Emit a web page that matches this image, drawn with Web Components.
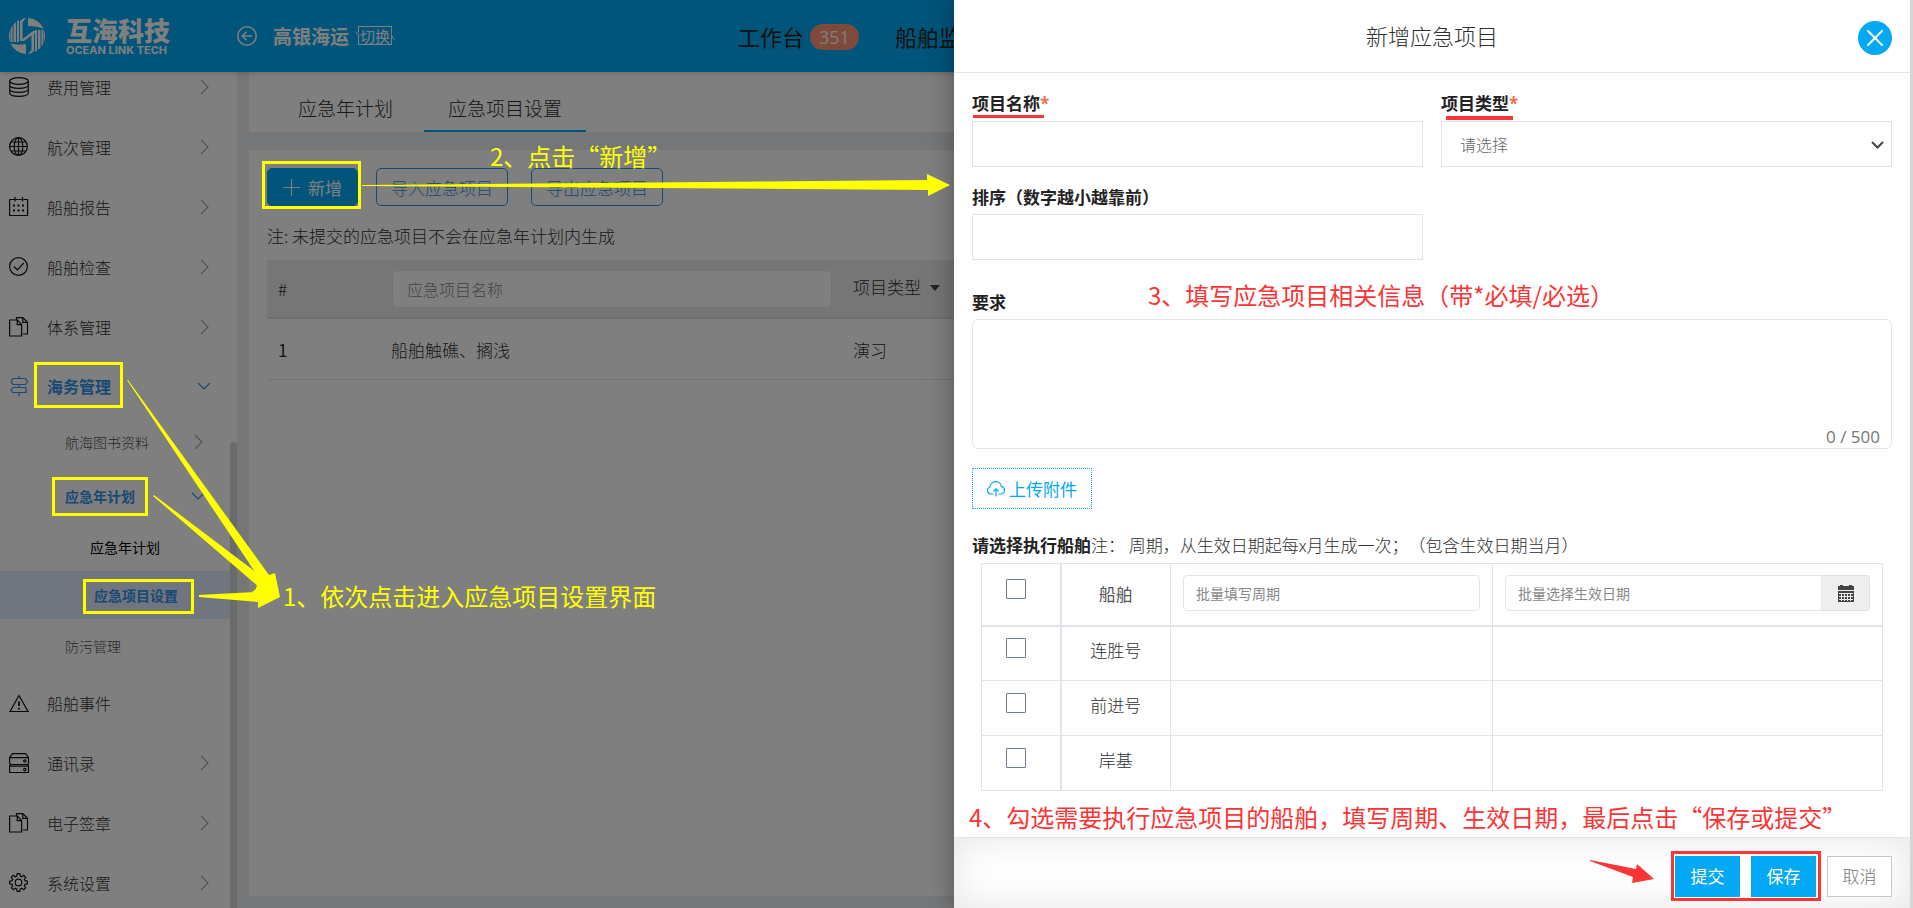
<!DOCTYPE html>
<html lang="zh-CN">
<head>
<meta charset="utf-8">
<title>互海科技 - 应急项目设置</title>
<style>
  html, body { margin: 0; height: 100%; }
  body {
    --cjk: "Noto Sans CJK SC", sans-serif;
    --num: "Open Sans", "Noto Sans CJK SC", sans-serif;
    --brand: #03a9f4;
    --active: #3092e8;
    --line: #e1e5e9;
    font-family: var(--cjk);
    font-size: 17px;
    font-weight: 300;
    color: #303030;
    text-spacing-trim: space-all;
    overflow: hidden;
  }
</style>
</head>
<body>
<app-shell></app-shell>

<script>
const define = (name, html, setup) => {
  const template = document.createElement('template');
  template.innerHTML = html;
  customElements.define(name, class extends HTMLElement {
    constructor() {
      super();
      this.attachShadow({ mode: 'open' }).append(template.content.cloneNode(true));
    }
    connectedCallback() { if (setup) setup(this, this.shadowRoot); }
  });
};

/* Line icons of the side menu, on a 20 x 20 grid */
const ICONS = {
  coins: '<ellipse cx="10" cy="4" rx="9.3" ry="3.4"/><path d="M.7 4v12c0 2 4 3.400 9.300 3.400s9.300-1.400 9.300-3.400V4M.7 8c0 2 4 3.400 9.300 3.400S19.300 10 19.300 8M.7 12c0 2 4 3.400 9.300 3.400s9.300-1.400 9.300-3.400"/>',
  globe: '<circle cx="9.500" cy="9.500" r="8.900"/><ellipse cx="9.500" cy="9.500" rx="4.300" ry="8.900"/><path d="M9.500.6v17.800M.6 9.500h17.800M2 5h15M2 14h15"/>',
  calendar: '<path d="M.6 2.500h18v16H.6zM6 0v4.500M13.500 0v4.500"/><path stroke-width="2" d="M4 8.500h2M8.500 8.500h2M13 8.500h2M4 13.500h2M8.500 13.500h2M13 13.500h2"/>',
  check: '<circle cx="9.500" cy="9.500" r="8.900"/><path d="M4.800 9.500l3.500 3.500 6.500-7"/>',
  files: '<path d="M.6 3h7.800l4.200 4.500V19H.6zM8.200 3.200v4.500h4.200M7.500 3V.6h6.300l4.700 4.600V17h-4.500M13.700.8v4.600h4.600"/>',
  sign: '<path d="M10 0v2.500M10 8.500v3M10 16.500V20M4 2.500h12.500l2 3-2 3H4l-2-3zM4 11.500h13v5H4l-2-2.500z"/>',
  warning: '<path d="M10 2.500l9 16H1z"/><path stroke-width="1.800" d="M10 8.500v4.500M10 14.800v1.700"/>',
  server: '<path d="M3.500.7h13l3 3.800v5.800l-1 1 1 1.200v7H.6v-7l1-1.200-1-1V4.500zM.6 4.700h19M1 11.500h18M.6 13.200h19"/><circle cx="15.800" cy="8" r="1.200"/><circle cx="15.800" cy="16.600" r="1.200"/>',
  gear: '<circle cx="9.500" cy="9.500" r="3.300"/><path d="M8.200.7h2.600l.5 2.300 1.500.7 2-1.400 1.900 1.900-1.400 2 .7 1.500 2.400.5v2.600l-2.400.5-.7 1.500 1.400 2-1.900 1.900-2-1.400-1.500.7-.5 2.400H8.200l-.5-2.400-1.500-.7-2 1.400-1.900-1.900 1.400-2L3 11.300l-2.400-.5V8.200L3 7.700l.7-1.500-1.400-2 1.900-1.900 2 1.400L7.700 3z"/>'
};

define('nav-item', `
<style>
  :host { display: block; }
  a {
    display: grid; grid-template-columns: 38px 1fr 30px; align-items: center;
    box-sizing: border-box; height: 60px; padding-left: 9px; padding-right: 18px;
    color: inherit; text-decoration: none; font-size: 16px; white-space: nowrap;
  }
  :host([compact]) a { height: 58px; }
  :host([level="2"]) a, :host([level="3"]) a { font-size: 14px; }
  :host([level="2"]) a { height: 54px; grid-template-columns: 1fr 30px; padding-left: 65px; padding-right: 24px; color: #505050; }
  :host([level="3"]) a { height: 48px; grid-template-columns: 1fr; padding-left: 90px; color: #000; font-weight: 400; }
  :host([level]) .icon { display: none; }
  :host([level="3"]) .arrow { display: none; }
  :host([active]) a { color: var(--active); font-weight: 700; }
  :host([selected]) a { background: #e2ebfd; padding-left: 94px; }
  svg { fill: none; stroke: currentColor; stroke-width: 1.2; overflow: visible; display: block; }
  .icon { color: #111; }
  :host([active]) .icon { color: var(--active); }
  .arrow { color: #a8a8a8; justify-self: center; }
  :host([active]) .arrow { color: var(--active); }
</style>
<a href="#">
  <svg class="icon" width="20" height="20"></svg>
  <span><slot></slot></span>
  <svg class="arrow" width="14" height="14"></svg>
</a>`, (host, root) => {
  root.querySelector('.icon').innerHTML = ICONS[host.getAttribute('icon')] || '';
  const arrow = { right: 'M4 0l7 7-7 7', down: 'M1 4l6 6 6-6' }[host.getAttribute('arrow')];
  root.querySelector('.arrow').innerHTML = arrow ? `<path d="${arrow}"/>` : '';
});

define('side-nav', `
<style>
  :host { display: block; position: relative; overflow: hidden; background: #fff; }
  nav { margin-top: -15px; }
  i { position: absolute; right: 0; top: 370px; bottom: -8px; width: 7px; border-radius: 4px; background: #d4d4d4; }
</style>
<nav>
  <nav-item icon="coins" arrow="right">费用管理</nav-item>
  <nav-item icon="globe" arrow="right">航次管理</nav-item>
  <nav-item icon="calendar" arrow="right">船舶报告</nav-item>
  <nav-item icon="check" arrow="right">船舶检查</nav-item>
  <nav-item icon="files" arrow="right">体系管理</nav-item>
  <nav-item icon="sign" arrow="down" compact active>海务管理</nav-item>
  <nav-item level="2" arrow="right">航海图书资料</nav-item>
  <nav-item level="2" arrow="down" active>应急年计划</nav-item>
  <nav-item level="3">应急年计划</nav-item>
  <nav-item level="3" active selected>应急项目设置</nav-item>
  <nav-item level="2">防污管理</nav-item>
  <nav-item icon="warning">船舶事件</nav-item>
  <nav-item icon="server" arrow="right">通讯录</nav-item>
  <nav-item icon="files" arrow="right">电子签章</nav-item>
  <nav-item icon="gear" arrow="right">系统设置</nav-item>
</nav>
<i></i>`);

define('app-header', `
<style>
  :host {
    display: grid; grid-template-columns: 237px 501px 1fr; align-items: center; height: 72px;
    background: var(--brand); color: #fff; box-shadow: 0 1px 6px rgba(0,0,0,.2); position: relative;
  }
  a { color: inherit; text-decoration: none; }
  .brand { display: flex; align-items: center; gap: 21px; padding-left: 9px; }
  .name { display: grid; justify-items: start; font-weight: 700; white-space: nowrap; }
  .name b { font-size: 26px; line-height: 28px; }
  .name small { font: 700 11px/13px Inter, sans-serif; }
  .company { display: flex; align-items: center; font-size: 19px; font-weight: 700; padding-bottom: 1px; }
  .company svg { margin-right: 16px; }
  .switch { position: relative; margin-left: 9px; padding: 0 1px; border: 1px solid #fff; font-size: 15px; line-height: 17px; font-weight: 400; }
  .switch::before, .switch::after { content: ""; position: absolute; width: 1px; height: 6px; background: #fff; box-shadow: 1px 0 var(--brand); rotate: -35deg; }
  .switch::before { left: -2px; top: 4px; }
  .switch::after { right: -2px; bottom: 4px; }
  nav { display: flex; gap: 36px; font-size: 22px; color: #222; font-weight: 400; white-space: nowrap; overflow: hidden; }
  nav a { display: flex; align-items: center; gap: 6px; }
  .badge { margin-top: 2px; padding: 0 9px; border-radius: 13px; background: #ff9478; color: #fff; font: 400 18px/26px var(--num); }
</style>
<a class="brand" href="#">
  <svg width="36" height="36" viewBox="0 0 36 36">
    <defs><clipPath id="disc"><circle cx="18" cy="18" r="18"/></clipPath></defs>
    <g clip-path="url(#disc)" fill="#fff">
      <path d="M19 0c7 0 13 3 16.500 11C30 9 25 8 19 8z"/>
      <path d="M17 36C10 36 4 33 .5 25c5 2 10 2 16.500 1z"/>
      <path d="M14.500 0H17l-3.500 4v17L11 23V3zM8 3l2-1v22H8zM4.500 6.500L7 4v20H4.500zM1.500 10l2-3v17h-2zM0 13h1v10H0z"/>
      <path d="M21.500 36H19l3.500-4V15l2.500-2v20zM28 33l-2 1V12h2zM31.500 29.500L29 32V12h2.500zM34.500 26l-2 3V12h2zM36 23h-1V13h1z"/>
      <path d="M11 23l13-10h4.500L15 23z"/>
    </g>
  </svg>
  <span class="name"><b>互海科技</b><small>OCEAN LINK TECH</small></span>
</a>
<div class="company">
  <svg width="20" height="20" fill="none" stroke="#fff" stroke-width="1.500"><circle cx="10" cy="10" r="9.200"/><path d="M15 10H5.500M9.500 5.800L5.200 10l4.300 4.200"/></svg>
  <span>高银海运</span>
  <a class="switch" href="#">切换</a>
</div>
<nav><a href="#">工作台 <span class="badge">351</span></a><a href="#">船舶监控</a></nav>`);

define('plan-page', `
<style>
  :host { display: grid; grid-template-rows: 60px 1fr; gap: 18px; padding: 0 0 12px 12px; background: #e9ecf0; }
  .tabs { display: flex; gap: 7px; padding-left: 25px; background: #fff; }
  .tabs a { padding: 0 24px; font-size: 19px; line-height: 72px; height: 58px; color: #303030; text-decoration: none; border-bottom: 2px solid transparent; }
  .tabs a[aria-current] { border-color: var(--brand); }
  section { background: #fff; padding: 18px; }
  .bar { display: flex; gap: 18px; }
  .bar div { display: flex; gap: 23px; }
  button {
    box-sizing: border-box; height: 38px; padding: 0 14px; border: 1px solid var(--active); border-radius: 5px;
    background: none; color: var(--active); font: inherit; display: flex; align-items: center; gap: 8px; white-space: nowrap;
  }
  .add { background: var(--brand); border-color: var(--brand); color: #fff; padding: 0 15px; font-weight: 400; }
  p { margin: 18px 0 12px; line-height: 24px; }
  table { width: 100%; border-collapse: collapse; table-layout: fixed; }
  th, td { height: 60px; padding: 0 11px; text-align: left; font-weight: 300; border-bottom: 1px solid #e4e4e4; }
  td:first-child { font-weight: 400; }
  th { background: #ededed; border-bottom: 2px solid #dcdcdc; height: 57px; }
  th:last-child { padding-bottom: 4px; height: 53px; }
  th input {
    box-sizing: border-box; width: 100%; height: 38px; padding: 0 14px; margin: 0 0 0 1px; border: 1px solid #e8e8e8; border-radius: 5px;
    background: #fff; font: inherit; font-size: 16px; display: block;
  }
  th input::placeholder { color: #888; opacity: 1; }
  .caret { display: inline-block; margin-left: 9px; vertical-align: 3px; border: 5px solid transparent; border-top: 6px solid #444; border-bottom: 0; }
</style>
<nav class="tabs"><a href="#">应急年计划</a><a href="#" aria-current="page">应急项目设置</a></nav>
<section>
  <div class="bar">
    <button class="add"><svg width="17" height="17" stroke="#fff" stroke-width="1.200"><path d="M8.500 0v17M0 8.500h17"/></svg>新增</button>
    <div><button>导入应急项目</button><button>导出应急项目</button></div>
  </div>
  <p>注: 未提交的应急项目不会在应急年计划内生成</p>
  <table>
    <colgroup><col style="width:113px"><col style="width:462px"><col></colgroup>
    <thead><tr><th>#</th><th><input aria-label="应急项目名称" placeholder="应急项目名称"></th><th>项目类型<i class="caret"></i></th></tr></thead>
    <tbody><tr><td>1</td><td>船舶触礁、搁浅</td><td>演习</td></tr></tbody>
  </table>
</section>`);

define('form-field', `
<style>
  :host { display: grid; grid-template-columns: minmax(0, 1fr); row-gap: 5px; position: relative; }
  ::slotted(label) { font-weight: 700; line-height: 24px; color: #222; }
</style>
<slot name="label"></slot><slot></slot>`);

define('project-drawer', `
<style>
  :host { display: flex; flex-direction: column; background: #fff; box-shadow: 0 0 24px rgba(0,0,0,.35); }
  header { display: grid; grid-template-columns: 34px 1fr 34px; align-items: center; padding: 0 18px; height: 72px; border-bottom: 1px solid #e5e5e5; flex: none; }
  h1 { grid-column: 2; margin: 0; text-align: center; font-size: 22px; line-height: 32px; font-weight: 300; padding-bottom: 2px; }
  .close { width: 34px; height: 34px; margin-top: 4px; padding: 0; border: 0; border-radius: 50%; background: var(--brand); display: grid; place-items: center; }
  main { flex: 1; min-height: 0; padding: 18px 18px 0; overflow: hidden; }
  .grid { display: grid; grid-template-columns: 1fr 1fr; gap: 18px; margin-bottom: 30px; }
  em { color: #f0714f; font-style: normal; font-family: var(--num); }
  input, textarea, select { box-sizing: border-box; width: 100%; border: 1px solid var(--line); background: #fff; font: inherit; color: inherit; margin: 0; display: block; }
  .box { height: 46px; padding: 0 18px; border-radius: 0; font-size: 16px; }
  select { appearance: none; color: #666; }
  .caret { position: absolute; right: 8px; bottom: 18px; pointer-events: none; }
  textarea { height: 130px; resize: none; border-radius: 6px; }
  .count { position: absolute; right: 12px; bottom: 0; font: 400 17px/24px var(--num); color: #777; }
  .upload { display: flex; align-items: center; gap: 4px; box-sizing: border-box; height: 41px; margin: 19px 0 24px; padding: 0 14px; border: 1px dotted var(--brand); background: #fff; color: var(--brand); font: inherit; font-weight: 400; }
  p { margin: 0 0 6px; line-height: 24px; }
  p b { font-weight: 700; color: #222; }
  .ships { padding: 0 9px; }
  table { width: 100%; border-collapse: collapse; table-layout: fixed; }
  th, td { box-sizing: border-box; height: 55px; padding: 0 12px; border: 1px solid var(--line); font-weight: 300; text-align: center; }
  th { height: 62px; border-bottom-width: 2px; font-weight: 400; color: #555; padding-bottom: 2px; }
  th:first-child, td:first-child { border-right-width: 2px; padding: 0 9px 10px 0; }
  td { padding-bottom: 8px; }
  input[type=checkbox] { appearance: none; width: 20px; height: 20px; border: 1px solid #6d7d90; border-radius: 1px; margin: 0 auto; }
  .small { height: 36px; padding: 0 12px; border-radius: 4px; font-size: 14px; }
  .small::placeholder { color: #888; opacity: 1; }
  .date { display: flex; }
  .date .small { border-radius: 4px 0 0 4px; }
  .date button { flex: none; width: 48px; padding: 0; border: 1px solid #dfe2e5; border-left: 0; border-radius: 0 4px 4px 0; background: #eee; display: grid; place-items: center; }
  footer { flex: none; display: flex; justify-content: flex-end; gap: 11px; padding: 18px 18px 11px; border-top: 1px solid #e5e5e5; box-shadow: inset 0 0 40px rgba(0,0,0,.1); }
  footer button { box-sizing: border-box; height: 41px; width: 65px; padding: 0 0 2px; border: 1px solid var(--brand); background: var(--brand); color: #fff; font: inherit; font-weight: 400; }
  footer .plain { background: #fff; border-color: #c8c8c8; color: #777; font-weight: 300; }
</style>
<header>
  <h1>新增应急项目</h1>
  <button class="close" aria-label="关闭"><svg width="16" height="16" stroke="#fff" stroke-width="2" stroke-linecap="round"><path d="M1 1l14 14M15 1L1 15"/></svg></button>
</header>
<main>
  <div class="grid">
    <form-field><label slot="label" for="name">项目名称<em>*</em></label><input class="box" id="name"></form-field>
    <form-field>
      <label slot="label" for="type">项目类型<em>*</em></label>
      <select class="box" id="type"><option>请选择</option></select>
      <svg class="caret" width="13" height="8" fill="none" stroke="#444" stroke-width="2"><path d="M1 1l5.500 5.500L12 1"/></svg>
    </form-field>
    <form-field><label slot="label" for="order">排序（数字越小越靠前）</label><input class="box" id="order"></form-field>
  </div>
  <form-field><label slot="label" for="need">要求</label><textarea id="need"></textarea><span class="count">0 / 500</span></form-field>
  <button class="upload"><svg width="18" height="16" fill="none" stroke="currentColor" stroke-width="1.200"><path d="M6.500 13H4.300A3.600 3.600 0 0 1 3 6 5.700 5.700 0 0 1 14.300 5.300 3.900 3.900 0 0 1 14 13h-2.500M9 15.500V8M6.300 10.500L9 7.800l2.700 2.700"/></svg>上传附件</button>
  <p><b>请选择执行船舶</b>注： 周期，从生效日期起每x月生成一次；（包含生效日期当月）</p>
  <div class="ships">
    <table>
      <colgroup><col style="width:79px"><col style="width:110px"><col style="width:322px"><col></colgroup>
      <thead><tr>
        <th><input type="checkbox" aria-label="全选"></th><th>船舶</th>
        <th><input class="small" aria-label="周期" placeholder="批量填写周期"></th>
        <th><div class="date"><input class="small" aria-label="生效日期" placeholder="批量选择生效日期"><button aria-label="选择日期"><svg width="16" height="17" fill="#444"><path d="M0 1h2V0h3v1h6V0h3v1h2v4H0zM0 6h16v11H0z"/><path stroke="#eee" d="M1 8.500h14M1 11.500h14M1 14.500h14M3.500 8v8M6.500 8v8M9.500 8v8M12.500 8v8"/></svg></button></div></th>
      </tr></thead>
      <tbody>
        <tr><td><input type="checkbox" aria-label="连胜号"></td><td>连胜号</td><td></td><td></td></tr>
        <tr><td><input type="checkbox" aria-label="前进号"></td><td>前进号</td><td></td><td></td></tr>
        <tr><td><input type="checkbox" aria-label="岸基"></td><td>岸基</td><td></td><td></td></tr>
      </tbody>
    </table>
  </div>
</main>
<footer><button>提交</button><button>保存</button><button class="plain">取消</button></footer>`);

/* Tutorial marks drawn over the interface: frames, arrows and step captions */
define('guide-marks', `
<style>
  :host { position: absolute; inset: 0; pointer-events: none; overflow: hidden; font-size: 24px; line-height: 32px; font-weight: 400; white-space: nowrap; }
  svg { position: absolute; left: 0; top: 0; width: 100%; height: 100%; }
  span { position: absolute; }
  .yellow { color: #ff0; }
  .red { color: #fc3435; }
</style>
<svg>
  <g fill="none" stroke="#ff0" stroke-width="3">
    <rect x="35.500" y="363.500" width="86" height="43"/><rect x="53.500" y="478.500" width="93" height="36"/>
    <rect x="84.500" y="580.500" width="108" height="32"/><rect x="263.500" y="162.500" width="96" height="45"/>
  </g>
  <g fill="#ff0">
    <path d="M128 380L269 575l6-2 5 24-26-15 1-10L127 380z"/>
    <path d="M154 495l103 78 23 24-28-5 7-5-106-91z"/>
    <path d="M199 595l56-3 2-7 23 12-22 11v-6l-59-5z"/>
    <path d="M362 185l565-5v-6l23 11-22 11v-6l-566-4z"/>
  </g>
  <g fill="#fc3435">
    <path d="M973 115h71v3h-71zM1446 116h67v4h-67z"/>
    <path d="M1590 860l46 9 1-5 17 15-22 4 1-6-43-16z"/>
  </g>
  <rect x="1672.500" y="852.500" width="147" height="47" fill="none" stroke="#fc3435" stroke-width="3"/>
</svg>
<span class="yellow" style="left:283px;top:580px">1、依次点击进入应急项目设置界面</span>
<span class="yellow" style="left:490px;top:140px">2、点击“新增”</span>
<span class="red" style="left:1148px;top:279px">3、填写应急项目相关信息（带*必填/必选）</span>
<span class="red" style="left:969px;top:801px">4、勾选需要执行应急项目的船舶，填写周期、生效日期，最后点击“保存或提交”</span>`);

define('app-shell', `
<style>
  :host { display: grid; grid-template: auto minmax(0, 1fr) / 237px minmax(0, 1fr); height: 100vh; box-sizing: border-box; border-right: 3px solid #d6d6d6; position: relative; overflow: hidden; }
  app-header { grid-column: 1 / 3; z-index: 1; }
  .scrim { position: absolute; inset: 0; z-index: 2; background: rgba(0,0,0,.5); }
  project-drawer { position: absolute; top: 0; right: 0; bottom: 0; width: calc(50% + 1px); z-index: 3; }
  guide-marks { z-index: 4; }
</style>
<app-header></app-header>
<side-nav></side-nav>
<plan-page></plan-page>
<div class="scrim"></div>
<project-drawer></project-drawer>
<guide-marks></guide-marks>`);
</script>
</body>
</html>
